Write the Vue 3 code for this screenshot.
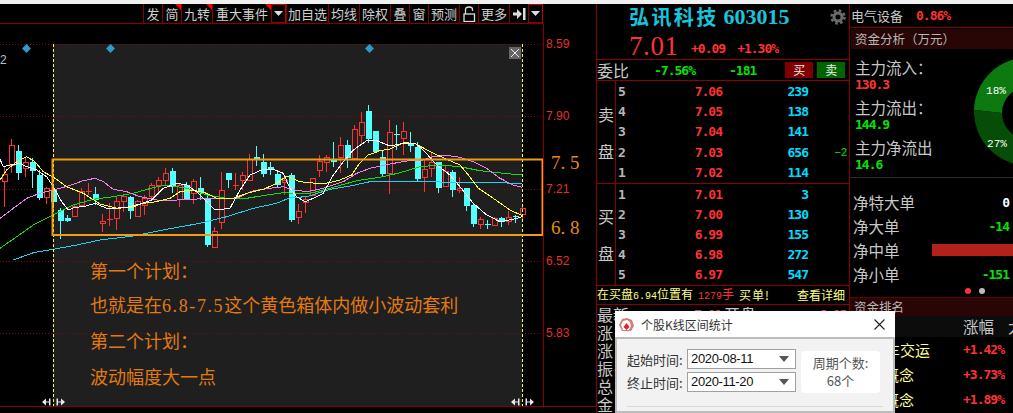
<script setup>
const tools = [
  { t: '发', w: 19 }, { t: '简', w: 19, mark: true }, { t: '九转', w: 31, mark: true },
  { t: '重大事件', w: 59, mark: true }, { arrow: true, w: 15 }, { t: '加自选', w: 42 },
  { t: '均线', w: 31 }, { t: '除权', w: 31 }, { t: '叠', w: 19 }, { t: '窗', w: 19 },
  { t: '预测', w: 31 }, { lock: true, w: 19 }, { t: '更多', w: 31 }, { jump: true, w: 19 },
  { arrow: true, w: 15 }
]
const z3 = [
  [13,110,132,155,232,'r'],[34,28,45,105,130,'r'],[55,45,63,128,150,'c'],[76,80,97,115,140,'r'],
  [97,85,97,122,175,'c'],[118,120,135,203,210,'c'],[139,170,175,203,222,'r'],[160,170,180,215,235,'c'],
  [181,235,240,272,327,'c'],[202,255,264,273,275,'c'],[223,225,228,260,262,'r'],[244,175,185,225,228,'r'],
  [265,158,185,185,195,'r'],[286,170,192,210,225,'c'],[307,252,274,280,305,'r'],[328,220,267,267,287,'r'],
  [349,198,214,265,300,'r'],[370,195,200,215,245,'r'],[391,198,202,242,267,'c'],[412,210,215,260,262,'r'],
  [433,195,205,227,255,'r'],[454,160,165,200,205,'r'],[475,140,150,165,195,'r'],[496,115,130,150,165,'r'],
  [517,115,123,172,190,'c'],[538,160,165,207,230,'r'],[559,155,165,207,210,'c'],[580,148,155,190,222,'r'],
  [601,140,175,190,210,'c'],[622,190,205,345,352,'c'],[643,292,305,352,355,'r'],[664,127,180,277,298,'r'],
  [685,128,128,150,175,'c'],[706,128,167,167,180,'r'],[727,125,135,152,180,'r'],[748,72,88,150,150,'r'],
  [769,48,80,88,108,'c'],[790,72,97,132,140,'c'],[811,95,112,120,135,'c'],[832,120,132,165,175,'c'],
  [853,135,152,158,195,'r'],[874,130,135,270,275,'c']
]
const z4 = [
  [25,312,333,352,372,'r'],[46,290,298,307,340,'r'],[67,235,235,285,285,'r'],[88,165,184,212,230,'r'],
  [109,165,172,187,215,'r'],[130,125,180,185,200,'c'],[151,110,136,173,218,'r'],[172,120,135,175,205,'c'],
  [193,75,88,175,178,'r'],[214,35,67,106,135,'r'],[235,15,33,118,130,'c'],[256,93,93,155,160,'c'],
  [277,150,172,222,232,'c'],[298,60,97,220,283,'r'],[319,75,103,103,150,'c'],[340,67,95,115,165,'r'],
  [361,97,130,137,155,'c'],[382,125,140,237,247,'c'],[403,180,207,233,275,'r'],[424,160,186,205,230,'r'],
  [445,185,186,263,278,'c'],[466,198,215,260,262,'r'],[487,210,215,270,290,'c'],[508,232,265,272,278,'r'],
  [529,265,265,318,332,'c'],[550,312,315,372,382,'c'],[571,352,358,373,386,'r'],[592,360,373,373,388,'c'],
  [613,352,355,376,378,'r'],[634,350,355,367,380,'c'],[655,333,352,365,376,'r'],[676,345,350,350,368,'c'],
  [697,318,325,344,358,'r']
]
const conv3 = c => [Math.round(c[0] / 3) + 0.5, ...c.slice(1, 5).map(v => 130 + v / 3), c[5]]
const conv4 = c => [290 + Math.round(c[0] / 3) + 0.5, ...c.slice(1, 5).map(v => 100 + v / 3), c[5]]
const candles = [...z3.map(conv3), ...z4.map(conv4)].map(([x, hi, top, bot, lo, type], id) => ({ id, x, hi, top, bot, lo, type }))

const path3 = a => a.map(p => `${(p[0] / 3).toFixed(1)},${(130 + p[1] / 3).toFixed(1)}`).join(' ')
const path4 = a => a.map(p => `${(290 + p[0] / 3).toFixed(1)},${(100 + p[1] / 3).toFixed(1)}`).join(' ')
const lines = [
  { c: '#17d4f0', p: path3([[40,390],[100,368],[160,358],[230,345],[300,330],[400,318],[500,298],[600,280],[680,260],[760,235],[830,220],[870,203]]) + ' ' + path4([[0,293],[50,290],[120,268],[180,258],[240,245],[300,245],[400,245],[500,247],[600,248],[697,250]]) },
  { c: '#0fdc0f', p: path3([[0,355],[50,320],[100,285],[160,255],[220,225],[280,208],[340,200],[400,190],[470,170],[500,165],[560,175],[620,195],[680,205],[740,205],[800,195],[860,187]]) + ' ' + path4([[0,280],[60,280],[130,262],[200,242],[280,230],[330,218],[390,200],[450,195],[510,200],[570,212],[640,220],[697,225]]) },
  { c: '#f07cf0', p: path3([[0,265],[40,235],[80,205],[120,190],[160,180],[205,168],[250,152],[285,145],[310,155],[340,178],[380,185],[420,200],[470,210],[530,210],[580,208],[620,205],[660,205],[710,205],[760,182],[810,175],[850,170]]) + ' ' + path4([[0,268],[50,275],[100,265],[160,245],[200,220],[240,205],[300,192],[350,183],[400,180],[430,170],[470,166],[510,172],[550,185],[590,205],[630,235],[670,255],[697,262]]) },
  { c: '#ffff30', p: path3([[0,150],[20,120],[50,95],[80,80],[105,95],[130,125],[165,145],[200,170],[250,190],[300,222],[350,235],[395,232],[430,220],[470,215],[510,205],[540,185],[580,180],[620,190],[650,205],[700,205],[740,190],[790,178],[830,160],[860,138]]) + ' ' + path4([[30,245],[100,252],[150,240],[185,225],[205,195],[235,165],[270,152],[300,147],[340,128],[375,130],[420,155],[470,178],[510,195],[535,225],[565,265],[610,295],[660,330],[697,347]]) },
  { c: '#ffffff', p: path3([[0,88],[10,110],[30,105],[60,100],[80,110],[110,120],[140,140],[160,170],[185,215],[205,240],[225,232],[250,230],[285,220],[320,235],[345,235],[380,232],[420,222],[455,210],[490,175],[530,160],[560,165],[590,185],[620,215],[645,240],[690,235],[720,180],[750,135],[785,120],[820,118],[850,130]]) + ' ' + path4([[0,265],[20,290],[45,305],[70,295],[100,280],[130,225],[160,185],[190,150],[230,122],[260,122],[300,138],[340,130],[375,130],[400,150],[440,195],[480,225],[510,260],[550,310],[590,345],[630,365],[670,358],[697,350]]) }
]
const grid = [44, 116, 189, 261, 333]
const axis = [
  { t: '8.59', y: 44 }, { t: '7.90', y: 116 }, { t: '7.21', y: 189 }, { t: '6.52', y: 261 }, { t: '5.83', y: 333 }
]
const sells = [['5','7.06','239',''],['4','7.05','138',''],['3','7.04','141',''],['2','7.03','656','−2'],['1','7.02','114','']]
const buys = [['1','7.01','3',''],['2','7.00','130',''],['3','6.99','155',''],['4','6.98','272',''],['5','6.97','547','']]
const stubs = ['涨', '涨', '振', '总', '金']
const netRows = [
  { l: '净特大单', v: '0', cls: 'white' }, { l: '净大单', v: '-14', cls: 'green' },
  { l: '净中单', bar: true }, { l: '净小单', v: '-151', cls: 'green' }
]
const rank = [['车交运','+1.42%',false],['概念','+3.73%',true],['概念','+1.89%',true]]
</script>

<template>
  <div class="root">
    <div class="strip"></div>
    <div class="main">
      <section class="left">
        <div class="toolbar">
          <div v-for="(b, i) in tools" :key="i" class="tool" :class="{ hot: b.arrow }" :style="{ width: b.w + 'px' }">
            <span v-if="b.t">{{ b.t }}</span>
            <i v-if="b.mark" class="mark"></i>
            <svg v-if="b.arrow" width="9" height="5" viewBox="0 0 9 5"><path d="M0 0h9L4.5 5z" fill="#ddd"/></svg>
            <svg v-if="b.lock" width="13" height="16" viewBox="0 0 13 16"><path d="M2.5 8V3.5Q2.5 1 6 1t3.500 2.500V5" fill="none" stroke="#ddd" stroke-width="1.300"/><rect x="1" y="8" width="10.500" height="7.500" fill="none" stroke="#ddd" stroke-width="1.300"/></svg>
            <svg v-if="b.jump" width="13" height="12" viewBox="0 0 13 12"><path d="M0 4.500h4V1l5 5-5 5V7.500H0z" fill="#ddd"/><rect x="10" y="0" width="2.500" height="12" fill="#ddd"/></svg>
          </div>
        </div>
        <div class="chart">
          <div class="plot">
            <svg class="canvas" width="543" height="382" viewBox="0 24 543 382">
              <rect x="53" y="44" width="469" height="362" fill="#1f1f1f"/>
              <line v-for="y in grid" :key="y" x1="0" x2="543" :y1="y + .5" :y2="y + .5" stroke="#7c0a0a" stroke-dasharray="1 2"/>
              <g v-for="c in candles" :key="c.id" shape-rendering="crispEdges">
                <template v-if="c.type === 'c'">
                  <line :x1="c.x" :x2="c.x" :y1="c.hi" :y2="c.lo" stroke="#54ffff"/>
                  <rect v-if="c.bot > c.top" :x="c.x - 3" :y="c.top" width="6" :height="c.bot - c.top" fill="#54ffff"/>
                  <line v-else :x1="c.x - 3" :x2="c.x + 3" :y1="c.top" :y2="c.top" stroke="#54ffff"/>
                </template>
                <template v-else>
                  <line :x1="c.x" :x2="c.x" :y1="c.hi" :y2="c.top" stroke="#ff3232"/>
                  <line :x1="c.x" :x2="c.x" :y1="c.bot" :y2="c.lo" stroke="#ff3232"/>
                  <rect v-if="c.bot > c.top" :x="c.x - 2.5" :y="c.top" width="5" :height="c.bot - c.top" fill="none" stroke="#ff3232"/>
                  <line v-else :x1="c.x - 3" :x2="c.x + 3" :y1="c.top" :y2="c.top" stroke="#ff3232"/>
                </template>
              </g>
              <polyline v-for="l in lines" :key="l.c" :points="l.p" fill="none" :stroke="l.c" stroke-width="1" shape-rendering="crispEdges"/>
              <line x1="53.500" x2="53.500" y1="44" y2="406" stroke="#ffff20" stroke-dasharray="3 2"/>
              <line x1="522.500" x2="522.500" y1="44" y2="406" stroke="#ffff20" stroke-dasharray="3 2"/>
              <rect x="52.500" y="159.500" width="490" height="75.500" fill="none" stroke="#f39c12" stroke-width="2"/>
              <path v-for="x in [26.5, 110.5, 369.5]" :key="x" :d="`M${x} 44l4.500 4.500L${x} 53l-4.500-4.500z`" fill="#2e9bc9"/>
              <g fill="#e8e8e8">
                <path d="M42 402l4-3.500v7zM46 401.500h3v-3h1.500v7H49v-3h-3z"/>
                <path d="M65 402l-4-3.500v7zM61 401.500h-3v-3h-1.500v7H58v-3h3z"/>
                <path d="M511 402l4-3.500v7zM515 401.500h3v-3h1.500v7H518v-3h-3z"/>
                <path d="M534 402l-4-3.500v7zM530 401.500h-3v-3h-1.500v7h1.500v-3h3z"/>
              </g>
              <rect x="509" y="47" width="12" height="12" fill="#666"/>
              <path d="M511 49l8 8M519 49l-8 8" stroke="#eee" fill="none"/>
            </svg>
            <span class="two">2</span>
            <div class="notes">
              <p>第一个计划：</p>
              <p>也就是在<span class="ascii">6.8-7.5</span>这个黄色箱体内做小波动套利</p>
              <p>第二个计划：</p>
              <p>波动幅度大一点</p>
            </div>
          </div>
          <div class="axis">
            <span v-for="a in axis" :key="a.t" class="tick" :style="{ top: a.y - 24 + 'px' }">{{ a.t }}</span>
            <span class="level l1">7. 5</span>
            <span class="level l2">6. 8</span>
          </div>
        </div>
      </section>

      <section class="quote">
        <header class="qhead">
          <div class="qname">
            <span class="cn">弘讯科技</span>
            <span class="code">603015</span>
            <svg class="gear" width="16" height="16" viewBox="0 0 16 16">
              <circle cx="8" cy="8" r="4" fill="none" stroke="#6a6a6a" stroke-width="3"/>
              <circle cx="8" cy="8" r="6.500" fill="none" stroke="#6a6a6a" stroke-width="2.500" stroke-dasharray="2.600 2.500"/>
            </svg>
          </div>
          <div class="qprice">
            <span class="big">7.01</span>
            <span class="num red up1">+0.09</span>
            <span class="num red up2">+1.30%</span>
          </div>
        </header>
        <div class="ratio">
          <span class="rlabel">委比</span>
          <span class="num green r1">-7.56%</span>
          <span class="num green r2">-181</span>
          <span class="btn buy">买</span>
          <span class="btn sell">卖</span>
        </div>
        <div class="book sellbook">
          <div class="side"><span>卖</span><span>盘</span></div>
          <div class="rows">
            <div v-for="r in sells" :key="r[0]" class="brow">
              <span class="num lv">{{ r[0] }}</span><span class="num red pr">{{ r[1] }}</span><span class="num cy pr">{{ r[2] }}</span><span class="delta">{{ r[3] }}</span>
            </div>
          </div>
        </div>
        <div class="book buybook">
          <div class="side"><span>买</span><span>盘</span></div>
          <div class="rows">
            <div v-for="r in buys" :key="r[0]" class="brow">
              <span class="num lv">{{ r[0] }}</span><span class="num red pr">{{ r[1] }}</span><span class="num cy pr">{{ r[2] }}</span><span class="delta">{{ r[3] }}</span>
            </div>
          </div>
        </div>
        <div class="notice">
          <span>在买盘<span class="mono">6.94</span>位置有</span>
          <span class="nred"><span class="mono">1279</span>手</span>
          <span class="nbuy">买单!</span>
          <span class="ndetail">查看详细</span>
        </div>
        <div class="stats">
          <div class="srow">
            <span class="sl">最新</span><span class="num red sv">7.01</span><span class="sl2">开盘</span><span class="num red sv2">6.95</span>
          </div>
          <div v-for="(s, i) in stubs" :key="i" class="srow"><span class="sl">{{ s }}</span></div>
        </div>
      </section>

      <aside class="side-panel">
        <div class="industry"><span>电气设备</span><span class="num red ind">0.86%</span></div>
        <div class="bar">资金分析（万元）</div>
        <div class="fund">
          <div class="fundtext">
            <div class="fl">主力流入：</div>
            <div class="num red fv">130.3</div>
            <div class="fl">主力流出：</div>
            <div class="num green fv">144.9</div>
            <div class="fl">主力净流出</div>
            <div class="num green fv">14.6</div>
          </div>
          <svg class="donut" width="39" height="108" viewBox="974 60 39 108">
            <path d="M974 111A54 54 0 0 1 1082 114H1054A26 26 0 0 0 1002 114z" fill="#0d7a10"/>
            <path d="M974 111A54 54 0 0 0 1082 114H1054A26 26 0 0 1 1002 114z" fill="#064d08"/>
            <text x="996" y="94.500" class="pct">18%</text>
            <text x="997" y="147.500" class="pct">27%</text>
          </svg>
        </div>
        <div class="net">
          <div v-for="n in netRows" :key="n.l" class="nrow">
            <span class="nl">{{ n.l }}</span>
            <i v-if="n.bar" class="nbar"></i>
            <span v-else class="num" :class="n.cls">{{ n.v }}</span>
          </div>
        </div>
        <div class="dots"><i class="d1"></i><i class="d2"></i></div>
        <div class="bar rankbar">资金排名</div>
        <div class="thead"><span class="th">涨幅</span><span class="th2">大</span></div>
        <div v-for="r in rank" :key="r[1]" class="trow">
          <span class="tn" :class="{ short: r[2] }">{{ r[0] }}</span><span class="num red tv">{{ r[1] }}</span>
        </div>
      </aside>
    </div>

    <div class="dialog">
      <div class="dtitle">
        <svg width="17" height="15" viewBox="0 0 17 15">
          <path d="M1 8L4 2l5-1 5 2 2 6-3 5H4z" fill="#d9777a"/>
          <path d="M3 8l2-4 4-1 3 2 1 4-2 4H5z" fill="#fff"/>
          <path d="M8.500 6l3 4-3 3-3-3z" fill="#e0242a"/>
        </svg>
        <span>个股K线区间统计</span>
        <svg class="close" width="11" height="11" viewBox="0 0 11 11"><path d="M.5.5l10 10M10.500.5l-10 10" stroke="#222" stroke-width="1.100" fill="none"/></svg>
      </div>
      <div class="dbody">
        <div class="dform">
          <div class="drow">
            <label>起始时间:</label>
            <div class="select"><span>2020-08-11</span><svg width="10" height="6" viewBox="0 0 10 6"><path d="M0 0h10L5 6z" fill="#555"/></svg></div>
          </div>
          <div class="drow">
            <label>终止时间:</label>
            <div class="select"><span>2020-11-20</span><svg width="10" height="6" viewBox="0 0 10 6"><path d="M0 0h10L5 6z" fill="#555"/></svg></div>
          </div>
        </div>
        <div class="dcount"><span>周期个数:</span><span>68个</span></div>
      </div>
      <div class="dsep"></div>
    </div>
  </div>
</template>

<style>
html, body { margin: 0; background: #000; }
</style>

<style scoped>
.root { position: relative; width: 1013px; height: 413px; overflow: hidden; background: #000; font-family: "Noto Sans CJK SC", "Liberation Sans", sans-serif; color: #c8c8c8; }
.strip { height: 4px; background: #f0f0f0; }
.main { display: flex; height: 409px; }
.left { width: 596px; flex: none; }
.toolbar { display: flex; height: 20px; padding-left: 143px; box-sizing: border-box; width: 543px; border-bottom: 1px solid #8a0000; }
.tool { position: relative; flex: none; box-sizing: border-box; display: flex; align-items: center; justify-content: center; border-left: 1px solid #8a0000; font-size: 13px; line-height: 19px; white-space: nowrap; color: #cfcfcf; }
.tool.hot { border: 1px solid #8a0000; border-top-color: #c00000; border-right-color: #c00000; }
.mark { position: absolute; right: 0; top: 0; width: 0; height: 0; border-top: 6px solid #ff0000; border-left: 6px solid transparent; }
.chart { display: flex; height: 382px; border-bottom: 1px solid #8a0000; margin-top: 0; }
.plot { position: relative; width: 543px; height: 382px; flex: none; }
.canvas { display: block; }
.two { position: absolute; left: 0; top: 29px; font: 12px/14px "Liberation Sans", sans-serif; color: #b8c0c8; }
.notes { position: absolute; left: 90px; top: 228px; color: #e27a12; font-size: 18px; line-height: 36px; white-space: nowrap; }
.notes p { margin: 0; }
.notes p:first-child { margin-bottom: -2px; }
.ascii { font-family: "Liberation Serif", serif; font-size: 18px; letter-spacing: 1.600px; line-height: 1; }
.axis { position: relative; flex: 1; border-left: 1px solid #8a0000; }
.tick { position: absolute; left: 2px; transform: translateY(-50%); font: 12px/14px "Liberation Sans", sans-serif; color: #e53030; }
.level { position: absolute; left: 7px; font: 19px/20px "Liberation Serif", serif; color: #e8871a; white-space: pre; }
.l1 { top: 129px; }
.l2 { top: 194px; }
.num { font-family: "DejaVu Sans Mono", monospace; font-weight: 700; font-size: 13px; letter-spacing: -1px; }
.red { color: #ff3232; }
.green { color: #00e600; }
.white { color: #fff; }
.cy { color: #00dcff; }
.quote { width: 254px; flex: none; box-sizing: border-box; border-left: 1px solid #8a0000; border-right: 1px solid #8a0000; }
.qhead { height: 56px; box-sizing: border-box; border-bottom: 1px solid #8a0000; padding-left: 32px; }
.qname { display: flex; align-items: center; height: 26px; margin-bottom: 3px; color: #18c4dc; }
.cn { font-size: 20px; font-weight: 700; letter-spacing: 2.400px; line-height: 26px; }
.code { margin-left: 5px; font: 700 22px/26px "Liberation Serif", serif; }
.gear { margin-left: 40px; }
.qprice { display: flex; align-items: center; height: 26px; }
.big { width: 62px; font: 27px/26px "Liberation Serif", serif; letter-spacing: .6px; color: #ff3232; }
.up1, .up2 { margin-top: 5px; }
.up2 { margin-left: 12px; }
.ratio { position: relative; display: flex; align-items: center; height: 21px; box-sizing: border-box; border-bottom: 1px solid #8a0000; }
.rlabel { width: 57px; font-size: 16px; line-height: 20px; }
.r2 { margin-left: 31px; }
.r1 { width: 44px; display: inline-block; }
.btn { width: 28px; height: 16px; font-size: 12px; line-height: 16px; text-align: center; color: #eee; }
.buy { margin-left: 29px; background: #800000; }
.sell { margin-left: 4px; background: #006400; }
.book { display: flex; box-sizing: border-box; border-bottom: 1px solid #8a0000; }
.sellbook { height: 103px; }
.buybook { height: 102px; }
.side { flex: none; box-sizing: border-box; display: flex; flex-direction: column; justify-content: center; align-items: center; gap: 21px; font-size: 16px; line-height: 16px; border-right: 1px solid #8a0000; width: 19px; }
.rows { flex: 1; display: flex; flex-direction: column; justify-content: space-around; }
.brow { display: grid; grid-template-columns: 20px 86px 86px 39px; height: 20px; align-items: center; }
.lv { color: #b8b8b8; padding-left: 2px; }
.pr { text-align: right; }
.delta { text-align: right; font: 11px/14px "Liberation Sans", sans-serif; color: #00e600; }
.notice { display: flex; align-items: center; height: 19px; box-sizing: border-box; border-bottom: 1px solid #8a0000; font-size: 12px; line-height: 18px; color: #ffff80; white-space: nowrap; }
.mono { font-family: "Liberation Mono", monospace; font-size: 10px; }
.nred { margin-left: 5px; color: #ff3232; }
.nbuy { margin-left: 5px; letter-spacing: 1px; }
.ndetail { margin-left: 27px; }
.stats { display: flex; flex-direction: column; }
.srow { display: flex; align-items: center; height: 18px; white-space: nowrap; }
.sl { width: 97px; font-size: 16px; line-height: 18px; }
.sv { width: 30px; }
.sl2 { width: 95px; font-size: 16px; line-height: 18px; }
.side-panel { width: 163px; flex: none; overflow: hidden; }
.industry { display: flex; align-items: center; height: 24px; box-sizing: border-box; padding-left: 1px; font-size: 13px; border-bottom: 1px solid #8a0000; }
.ind { margin-left: 13px; }
.bar { height: 20px; margin: 1px 0 0 1px; padding-left: 4px; background: #280606; font-size: 12.500px; line-height: 20px; color: #b8b8b8; }
.fund { display: flex; justify-content: space-between; height: 129px; box-sizing: border-box; border-bottom: 1px solid #2c2c2c; }
.fundtext { padding: 8px 0 0 5px; }
.fl { font-size: 15.500px; line-height: 20px; white-space: nowrap; }
.fv { height: 20px; line-height: 16px; font-size: 13px; }
.donut { margin-top: 10px; flex: none; }
.pct { font: 11px "Liberation Mono", monospace; fill: #fff; text-anchor: middle; }
.net { padding-top: 12px; }
.nrow { display: flex; justify-content: space-between; align-items: center; height: 24px; padding: 0 4px 0 3px; font-size: 15.500px; white-space: nowrap; }
.nrow:nth-child(3) { padding-right: 0; }
.nbar { width: 81px; height: 12px; background: #b22218; }
.dots { display: flex; gap: 8px; height: 10px; padding: 0 0 0 115px; align-items: center; }
.dots i { width: 6px; height: 6px; border-radius: 50%; }
.d1 { background: #ff3040; }
.d2 { background: #bbb; }
.rankbar { margin: 1px 0 0; height: 18px; line-height: 18px; border-top: 1px solid #600; }
.thead { position: relative; height: 21px; background: #0c0c0c; font-size: 15.500px; line-height: 21px; }
.th { position: absolute; left: 113px; }
.th2 { position: absolute; left: 158px; }
.trow { position: relative; height: 25px; display: flex; align-items: center; }
.tn { position: absolute; right: 83px; color: #ffff90; font-size: 15px; line-height: 20px; }
.tn.short { right: 99px; }
.tv { position: absolute; right: 9px; font-size: 13px; }
.dialog { position: absolute; left: 615px; top: 311px; width: 280px; height: 102px; box-sizing: border-box; background: #f2f2f2; border: 2px solid #bcbcbc; border-top: 0; color: #333; }
.dtitle { display: flex; align-items: center; gap: 6px; height: 26px; margin: 0 -2px; padding-left: 3px; background: #fff; border-bottom: 2px solid #bcbcbc; font-size: 12px; color: #333; }
.close { margin-left: auto; margin-right: 10px; }
.dbody { display: flex; gap: 5px; padding: 10px 0 0 10px; }
.dform { display: flex; flex-direction: column; gap: 3px; }
.drow { display: flex; align-items: center; gap: 7px; }
.drow label { width: 53px; font-size: 13px; line-height: 19px; white-space: nowrap; }
.select { width: 109px; height: 20px; box-sizing: border-box; display: flex; align-items: center; justify-content: space-between; padding: 0 6px 0 3px; border: 1px solid #a0a0a0; background: #fff; font: 13px/18px "Liberation Sans", sans-serif; letter-spacing: -.35px; color: #111; }
.dcount { width: 79px; height: 42px; margin-top: 2px; display: flex; flex-direction: column; align-items: center; justify-content: center; background: #fff; border-radius: 4px; font-size: 13px; line-height: 18px; color: #555; }
.dsep { height: 1px; margin: 13px 10px 0; background: #d8d8d8; }
</style>
